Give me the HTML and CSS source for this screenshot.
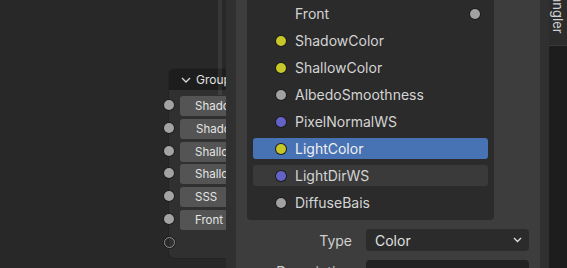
FILE: index.html
```html
<!DOCTYPE html>
<html lang="en">
<head>
  <meta charset="UTF-8" />
  <title>Group Sockets</title>
  <link rel="stylesheet" href="styles.css">
</head>
<body>

  <div class="editor">
    <div class="node">
      <div class="node-head">
        <svg class="chevron" width="10" height="10" viewBox="0 0 10 10"><path d="M1 3 L5 7 L9 3" fill="none" stroke="#d8d8d8" stroke-width="1.3"/></svg>
        <span>Group</span>
      </div>
      <div class="node-body">
        <div class="node-row"><i class="sock"></i><div class="field">ShadowColor</div></div>
        <div class="node-row"><i class="sock"></i><div class="field shift">ShadowColor</div></div>
        <div class="node-row"><i class="sock"></i><div class="field">ShallowColor</div></div>
        <div class="node-row"><i class="sock"></i><div class="field">ShallowColor</div></div>
        <div class="node-row"><i class="sock"></i><div class="field">SSS</div></div>
        <div class="node-row"><i class="sock"></i><div class="field">Front</div></div>
        <div class="node-row"><i class="sock empty"></i></div>
      </div>
    </div>
    <div class="scroll"></div>
  </div>

  <div class="sidebar">
    <div class="panel">
      <div class="list">
        <div class="item"><span class="name">Front</span><i class="dot grey right"></i></div>
        <div class="item"><i class="dot yellow"></i><span class="name">ShadowColor</span></div>
        <div class="item"><i class="dot yellow"></i><span class="name">ShallowColor</span></div>
        <div class="item"><i class="dot grey"></i><span class="name">AlbedoSmoothness</span></div>
        <div class="item"><i class="dot blue"></i><span class="name">PixelNormalWS</span></div>
        <div class="item active"><i class="dot yellow"></i><span class="name">LightColor</span></div>
        <div class="item hover"><i class="dot blue"></i><span class="name">LightDirWS</span></div>
        <div class="item"><i class="dot grey"></i><span class="name">DiffuseBais</span></div>
      </div>

      <div class="prop">
        <label>Type</label>
        <div class="select">
          <span>Color</span>
          <svg width="9" height="6" viewBox="0 0 9 6"><path d="M1 1 L4.5 4.5 L8 1" fill="none" stroke="#e0e0e0" stroke-width="1.3"/></svg>
        </div>
      </div>
      <div class="prop">
        <label>Description</label>
        <div class="text-field"></div>
      </div>
    </div>

    <div class="tabs">
      <div class="tab"><span>Node Wrangler</span></div>
    </div>
  </div>

</body>
</html>
```

FILE: styles.css
```css
body {
  margin: 0;
  width: 567px;
  height: 268px;
  overflow: hidden;
  display: flex;
  font-family: 'Inter', 'DejaVu Sans', sans-serif;
  font-size: 14px;
  color: #d6d6d6;
  background: #282828;
}

/* node editor */
.editor {
  position: relative;
  width: 226px;
  flex: none;
  overflow: hidden;
  background: #282828;
}

.node {
  position: absolute;
  left: 169px;
  top: 69px;
  width: 140px;
  height: 189px;
  border-radius: 5px;
  background: #303030;
  box-shadow: 0 0 0 1px #232323;
  font-size: 11.5px;
}

.node-head {
  height: 21px;
  display: flex;
  align-items: center;
  gap: 5px;
  padding-left: 12px;
  background: #1d1d1d;
  border-radius: 5px 5px 0 0;
  color: #e0e0e0;
  font-size: 12px;
}

.node-body {
  padding-top: 6px;
  display: flex;
  flex-direction: column;
  gap: 2.8px;
}

.node-row {
  position: relative;
  height: 20px;
}

.sock {
  position: absolute;
  left: -5px;
  top: 4px;
  width: 10px;
  height: 10px;
  border-radius: 50%;
  background: #a3a3a3;
  box-shadow: 0 0 0 1px #1f1f1f;
}

.sock.empty {
  background: none;
  box-sizing: border-box;
  border: 1px solid #8c8c8c;
  width: 11px;
  height: 11px;
}

.field {
  margin-left: 11px;
  height: 20px;
  line-height: 20px;
  padding-left: 15px;
  background: #545454;
  border-radius: 3px;
  color: #e4e4e4;
  white-space: nowrap;
}

.field.shift {
  padding-left: 16px;
}

/* view scrollbar, drawn over the canvas */
.scroll {
  position: absolute;
  left: 218px;
  top: 0;
  width: 4px;
  height: 95px;
  background: rgba(255, 255, 255, 0.07);
}

/* sidebar */
.sidebar {
  flex: 1;
  display: flex;
  background: #303030;
  padding-left: 10px;
}

.panel {
  width: 304px;
  background: #3d3d3d;
  padding: 0 11px;
  box-sizing: border-box;
}

.list {
  width: 247px;
  background: #2b2b2b;
  border-radius: 0 0 4px 4px;
  padding: 3px 6px 7px;
  box-sizing: border-box;
  display: flex;
  flex-direction: column;
  gap: 6px;
}

.item {
  height: 21px;
  display: flex;
  align-items: center;
  padding-left: 23px;
  border-radius: 3px;
  position: relative;
}

.item .name {
  margin-left: 9px;
  color: #d4d4d4;
}

.item.active {
  background: #4772b3;
}

.item.active .name {
  color: #f0f0f0;
}

.item.hover {
  background: #3a3a3a;
}

.dot {
  width: 10px;
  height: 10px;
  border-radius: 50%;
  box-shadow: 0 0 0 1px #1c1c1c;
  flex: none;
}

.dot.right {
  position: absolute;
  right: 8px;
}

.item .name:first-child {
  margin-left: 19px;
}

.grey { background: #a1a1a1; }
.yellow { background: #c7c729; }
.blue { background: #6363c7; }

.prop {
  display: grid;
  grid-template-columns: 105px 163px;
  column-gap: 14px;
  align-items: center;
  margin-top: 9px;
}

.prop label {
  text-align: right;
  color: #cfcfcf;
}

.select {
  height: 22px;
  background: #2b2b2b;
  border-radius: 4px;
  display: flex;
  align-items: center;
  justify-content: space-between;
  padding: 0 7px 0 9px;
  color: #e0e0e0;
}

.text-field {
  height: 22px;
  background: #222222;
  border-radius: 4px;
}

.tabs {
  width: 18px;
  margin-left: 9px;
  background: #1d1d1d;
}

.tab {
  height: 46px;
  background: #2c2c2c;
  border-bottom: 1px solid #3a3a3a;
  display: flex;
  flex-direction: column;
  justify-content: flex-end;
  align-items: center;
  padding-bottom: 11px;
  box-sizing: border-box;
}

.tab span {
  writing-mode: vertical-rl;
  white-space: nowrap;
  color: #cfcfcf;
  font-size: 13px;
}
```
